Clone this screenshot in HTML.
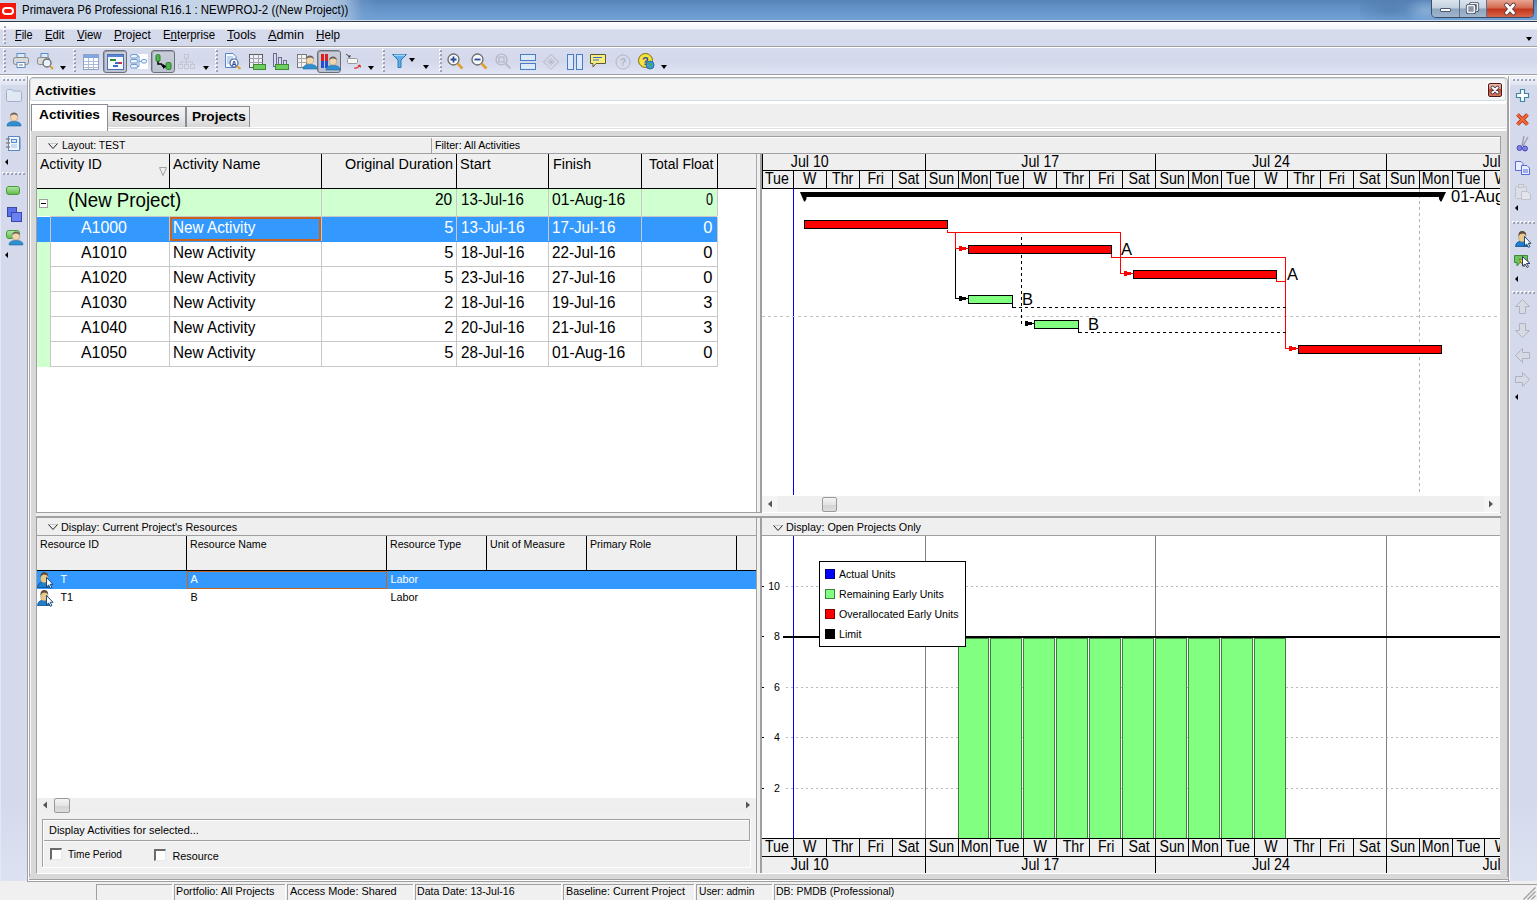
<!DOCTYPE html><html><head><meta charset="utf-8"><style>
*{margin:0;padding:0;box-sizing:border-box}
html,body{width:1537px;height:900px;overflow:hidden;background:#f0f0f0;font-family:"Liberation Sans",sans-serif;color:#000}
.a{position:absolute}
.t{position:absolute;white-space:nowrap;line-height:1}
.grip{position:absolute;width:3px;background:repeating-linear-gradient(#a9afc2 0 2px,transparent 2px 4px)}
.hgrip{position:absolute;height:3px;background:repeating-linear-gradient(90deg,#a9afc2 0 3px,transparent 3px 5px)}
.dd{position:absolute;width:0;height:0;border-left:3.5px solid transparent;border-right:3.5px solid transparent;border-top:4px solid #000}
.la{position:absolute;width:0;height:0;border-top:3px solid transparent;border-bottom:3px solid transparent;border-right:3px solid #000}
svg{position:absolute;overflow:visible}
</style></head><body>
<div class="a" style="left:0;top:0;width:1537px;height:20px;background:linear-gradient(#5682b5 0px,#5f8dc1 5px,#6898cd 12px,#6fa0d3 19px)"></div>
<div class="a" style="left:0;top:0;width:380px;height:20px;background:linear-gradient(90deg,rgba(200,214,232,1) 0px,rgba(196,211,230,1) 300px,rgba(170,195,224,0.8) 345px,rgba(130,165,210,0.3) 362px,rgba(110,150,200,0) 378px)"></div>
<div class="a" style="left:1360px;top:0;width:75px;height:20px;background:radial-gradient(ellipse 40px 14px at 30px 10px,rgba(60,95,140,0.35),rgba(60,95,140,0))"></div>
<div class="a" style="left:1400px;top:0;width:40px;height:20px;background:radial-gradient(ellipse 20px 12px at 25px 10px,rgba(200,220,240,0.35),rgba(200,220,240,0))"></div>
<div class="a" style="left:0px;top:20px;width:1537px;height:1px;background:#d2dce8"></div>
<div class="a" style="left:0px;top:21px;width:1537px;height:1px;background:#2c3a4c"></div>
<div class="a" style="left:0px;top:3px;width:16px;height:16px;background:#f4160a"></div>
<div class="a" style="left:2px;top:7px;width:12px;height:8px;border:2px solid #fff;border-radius:4px"></div>
<div class="t" style="left:21.50px;top:4.33px;font-size:12.6px;transform:scaleX(0.9090);transform-origin:0 0;">Primavera P6 Professional R16.1 : NEWPROJ-2 ((New Project))</div>
<div class="a" style="left:1431px;top:0;width:103px;height:18px;border:1px solid #3a4d66;border-top:none;border-radius:0 0 5px 5px;overflow:hidden"><div class="a" style="left:0;top:0;width:27px;height:17px;background:linear-gradient(#dbe4ee,#c3d0de 48%,#8da5bf 52%,#a2b6cc)"></div><div class="a" style="left:27px;top:0;width:1px;height:17px;background:#5d718a"></div><div class="a" style="left:28px;top:0;width:26px;height:17px;background:linear-gradient(#dbe4ee,#c3d0de 48%,#8da5bf 52%,#a2b6cc)"></div><div class="a" style="left:54px;top:0;width:1px;height:17px;background:#5d718a"></div><div class="a" style="left:55px;top:0;width:47px;height:17px;background:linear-gradient(#e8a593,#d46a52 45%,#c2361d 55%,#d8654a)"></div></div>
<div class="a" style="left:1440px;top:8px;width:11px;height:4px;background:#fff;border:1px solid #4a5a70;border-radius:1px"></div>
<svg style="left:1466px;top:2px" width="13" height="13"><rect x="4.5" y="1.5" width="7" height="7" rx="1" fill="none" stroke="#3c4a5e" stroke-width="3.2"/><rect x="4.5" y="1.5" width="7" height="7" rx="1" fill="none" stroke="#f4f4f4" stroke-width="1.6"/><rect x="2" y="4" width="7" height="7" rx="1" fill="#4a5a70"/><rect x="1.5" y="3.5" width="7" height="7" rx="1" fill="#c8d2dc" stroke="#3c4a5e" stroke-width="3.2"/><rect x="1.5" y="3.5" width="7" height="7" rx="1" fill="#8a96a6" stroke="#f4f4f4" stroke-width="1.6"/></svg>
<svg style="left:1503px;top:3px" width="14" height="12"><path d="M3.5 2 L10.5 10 M10.5 2 L3.5 10" stroke="#5a4040" stroke-width="4.6" stroke-linecap="round"/><path d="M3.5 2 L10.5 10 M10.5 2 L3.5 10" stroke="#fff" stroke-width="2.8" stroke-linecap="round"/></svg>
<div class="a" style="left:0;top:22px;width:1537px;height:25px;background:linear-gradient(#ffffff 0px,#f3f5fa 7px,#d6dbec 8px,#d4d9eb 24px)"></div>
<div class="a" style="left:0px;top:46px;width:1537px;height:1px;background:#a0a0a0"></div>
<div class="a" style="left:4px;top:26px;width:2px;height:2px;background:#9da3b4;box-shadow:-1px -1px 0 #ffffff"></div>
<div class="a" style="left:4px;top:30px;width:2px;height:2px;background:#9da3b4;box-shadow:-1px -1px 0 #ffffff"></div>
<div class="a" style="left:4px;top:34px;width:2px;height:2px;background:#9da3b4;box-shadow:-1px -1px 0 #ffffff"></div>
<div class="a" style="left:4px;top:38px;width:2px;height:2px;background:#9da3b4;box-shadow:-1px -1px 0 #ffffff"></div>
<div class="a" style="left:4px;top:42px;width:2px;height:2px;background:#9da3b4;box-shadow:-1px -1px 0 #ffffff"></div>
<div class="t" style="left:15.40px;top:28.96px;font-size:12.8px;transform:scaleX(0.8487);transform-origin:0 0;"><u>F</u>ile</div>
<div class="t" style="left:45.10px;top:28.96px;font-size:12.8px;transform:scaleX(0.8842);transform-origin:0 0;"><u>E</u>dit</div>
<div class="t" style="left:77.10px;top:28.96px;font-size:12.8px;transform:scaleX(0.8931);transform-origin:0 0;"><u>V</u>iew</div>
<div class="t" style="left:114.20px;top:28.96px;font-size:12.8px;transform:scaleX(0.9238);transform-origin:0 0;"><u>P</u>roject</div>
<div class="t" style="left:163.00px;top:28.96px;font-size:12.8px;transform:scaleX(0.8913);transform-origin:0 0;">E<u>n</u>terprise</div>
<div class="t" style="left:227.00px;top:28.96px;font-size:12.8px;transform:scaleX(0.9707);transform-origin:0 0;"><u>T</u>ools</div>
<div class="t" style="left:268.00px;top:28.96px;font-size:12.8px;transform:scaleX(0.9921);transform-origin:0 0;"><u>A</u>dmin</div>
<div class="t" style="left:316.00px;top:28.96px;font-size:12.8px;transform:scaleX(0.9115);transform-origin:0 0;"><u>H</u>elp</div>
<div class="dd" style="left:1526px;top:37px"></div>
<div class="a" style="left:0;top:47px;width:1537px;height:28px;background:linear-gradient(#d6dbee 0,#d3d8eb 14px,#d8ddef 20px,#e0e5f5 26px)"></div>
<div class="a" style="left:0px;top:47px;width:1537px;height:1px;background:#ffffff"></div>
<div class="a" style="left:0px;top:74px;width:1537px;height:1px;background:#a0a0a0"></div>
<div class="a" style="left:0px;top:75px;width:1537px;height:1px;background:#ffffff"></div>
<div class="a" style="left:4px;top:50px;width:2px;height:2px;background:#9da3b4;box-shadow:-1px -1px 0 #ffffff"></div>
<div class="a" style="left:4px;top:54px;width:2px;height:2px;background:#9da3b4;box-shadow:-1px -1px 0 #ffffff"></div>
<div class="a" style="left:4px;top:58px;width:2px;height:2px;background:#9da3b4;box-shadow:-1px -1px 0 #ffffff"></div>
<div class="a" style="left:4px;top:62px;width:2px;height:2px;background:#9da3b4;box-shadow:-1px -1px 0 #ffffff"></div>
<div class="a" style="left:4px;top:66px;width:2px;height:2px;background:#9da3b4;box-shadow:-1px -1px 0 #ffffff"></div>
<div class="a" style="left:4px;top:70px;width:2px;height:2px;background:#9da3b4;box-shadow:-1px -1px 0 #ffffff"></div>
<div class="a" style="left:74px;top:50px;width:2px;height:2px;background:#9da3b4;box-shadow:-1px -1px 0 #ffffff"></div>
<div class="a" style="left:74px;top:54px;width:2px;height:2px;background:#9da3b4;box-shadow:-1px -1px 0 #ffffff"></div>
<div class="a" style="left:74px;top:58px;width:2px;height:2px;background:#9da3b4;box-shadow:-1px -1px 0 #ffffff"></div>
<div class="a" style="left:74px;top:62px;width:2px;height:2px;background:#9da3b4;box-shadow:-1px -1px 0 #ffffff"></div>
<div class="a" style="left:74px;top:66px;width:2px;height:2px;background:#9da3b4;box-shadow:-1px -1px 0 #ffffff"></div>
<div class="a" style="left:74px;top:70px;width:2px;height:2px;background:#9da3b4;box-shadow:-1px -1px 0 #ffffff"></div>
<div class="a" style="left:216px;top:50px;width:2px;height:2px;background:#9da3b4;box-shadow:-1px -1px 0 #ffffff"></div>
<div class="a" style="left:216px;top:54px;width:2px;height:2px;background:#9da3b4;box-shadow:-1px -1px 0 #ffffff"></div>
<div class="a" style="left:216px;top:58px;width:2px;height:2px;background:#9da3b4;box-shadow:-1px -1px 0 #ffffff"></div>
<div class="a" style="left:216px;top:62px;width:2px;height:2px;background:#9da3b4;box-shadow:-1px -1px 0 #ffffff"></div>
<div class="a" style="left:216px;top:66px;width:2px;height:2px;background:#9da3b4;box-shadow:-1px -1px 0 #ffffff"></div>
<div class="a" style="left:216px;top:70px;width:2px;height:2px;background:#9da3b4;box-shadow:-1px -1px 0 #ffffff"></div>
<div class="a" style="left:383px;top:50px;width:2px;height:2px;background:#9da3b4;box-shadow:-1px -1px 0 #ffffff"></div>
<div class="a" style="left:383px;top:54px;width:2px;height:2px;background:#9da3b4;box-shadow:-1px -1px 0 #ffffff"></div>
<div class="a" style="left:383px;top:58px;width:2px;height:2px;background:#9da3b4;box-shadow:-1px -1px 0 #ffffff"></div>
<div class="a" style="left:383px;top:62px;width:2px;height:2px;background:#9da3b4;box-shadow:-1px -1px 0 #ffffff"></div>
<div class="a" style="left:383px;top:66px;width:2px;height:2px;background:#9da3b4;box-shadow:-1px -1px 0 #ffffff"></div>
<div class="a" style="left:383px;top:70px;width:2px;height:2px;background:#9da3b4;box-shadow:-1px -1px 0 #ffffff"></div>
<div class="a" style="left:440px;top:50px;width:2px;height:2px;background:#9da3b4;box-shadow:-1px -1px 0 #ffffff"></div>
<div class="a" style="left:440px;top:54px;width:2px;height:2px;background:#9da3b4;box-shadow:-1px -1px 0 #ffffff"></div>
<div class="a" style="left:440px;top:58px;width:2px;height:2px;background:#9da3b4;box-shadow:-1px -1px 0 #ffffff"></div>
<div class="a" style="left:440px;top:62px;width:2px;height:2px;background:#9da3b4;box-shadow:-1px -1px 0 #ffffff"></div>
<div class="a" style="left:440px;top:66px;width:2px;height:2px;background:#9da3b4;box-shadow:-1px -1px 0 #ffffff"></div>
<div class="a" style="left:440px;top:70px;width:2px;height:2px;background:#9da3b4;box-shadow:-1px -1px 0 #ffffff"></div>
<div class="a" style="left:103px;top:50px;width:24px;height:23px;border:1px solid #6d6f78;border-radius:3px;background:linear-gradient(#c8cdd9,#bcc2d0);box-shadow:inset 1px 1px 0 #9da2ae"></div>
<div class="a" style="left:151px;top:50px;width:24px;height:23px;border:1px solid #6d6f78;border-radius:3px;background:linear-gradient(#c8cdd9,#bcc2d0);box-shadow:inset 1px 1px 0 #9da2ae"></div>
<div class="a" style="left:317px;top:50px;width:24px;height:23px;border:1px solid #6d6f78;border-radius:3px;background:linear-gradient(#c8cdd9,#bcc2d0);box-shadow:inset 1px 1px 0 #9da2ae"></div>
<div class="dd" style="left:60px;top:66px"></div>
<div class="dd" style="left:203px;top:66px"></div>
<div class="dd" style="left:368px;top:66px"></div>
<div class="dd" style="left:409px;top:58px"></div>
<div class="dd" style="left:423px;top:65px"></div>
<div class="dd" style="left:661px;top:65px"></div>
<svg style="left:13px;top:53px" width="16" height="16"><rect x="4" y="0.5" width="8" height="5" fill="#dce9f7" stroke="#5b8bc8"/><rect x="0.5" y="4.5" width="15" height="7" rx="2" fill="#d9d9d9" stroke="#8a8a8a"/><rect x="4" y="9.5" width="8" height="5" fill="#fff" stroke="#5b8bc8"/><line x1="6" y1="12" x2="10" y2="12" stroke="#777"/></svg>
<svg style="left:37px;top:53px" width="18" height="17"><rect x="4" y="0.5" width="7" height="5" fill="#dce9f7" stroke="#5b8bc8"/><rect x="0.5" y="4.5" width="12" height="7" rx="2" fill="#d9d9d9" stroke="#8a8a8a"/><circle cx="10" cy="10" r="4" fill="#e8f2ff" stroke="#6a6a6a" stroke-width="1.3"/><line x1="13" y1="13" x2="16" y2="16" stroke="#d8a038" stroke-width="2"/></svg>
<svg style="left:83px;top:54px" width="16" height="16"><rect x="0.5" y="0.5" width="15" height="15" fill="#fff" stroke="#8fa3c3"/><rect x="1" y="1" width="14" height="3" fill="#7fa6e0"/><path d="M1 7.5H15M1 10.5H15M1 13.5H15M5.5 4V15M10.5 4V15" stroke="#a9bbd8"/></svg>
<svg style="left:107px;top:54px" width="17" height="16"><rect x="0.5" y="0.5" width="16" height="15" fill="#f4f8ff" stroke="#4d6fb3"/><rect x="1" y="1" width="15" height="2" fill="#5b84d6"/><rect x="3" y="5" width="6" height="2" fill="#2e8b2e"/><rect x="8" y="8" width="4" height="2" fill="#3a6cd0"/><rect x="12" y="8" width="3" height="2" fill="#e03030"/><rect x="6" y="11" width="5" height="2" fill="#3a6cd0"/></svg>
<svg style="left:130px;top:53px" width="18" height="17"><rect x="8" y="1" width="10" height="15" fill="#fff"/><g fill="#eef4ff" stroke="#6d9ad0"><rect x="0.5" y="1.5" width="7" height="3.5" rx="1.5"/><rect x="0.5" y="6.5" width="7" height="3.5" rx="1.5"/><rect x="0.5" y="11.5" width="7" height="3.5" rx="1.5"/><rect x="11.5" y="6.5" width="5" height="3.5" rx="1.5"/></g><path d="M7.5 3H9V13.5H7.5M9 8.3H11.5" fill="none" stroke="#6d9ad0"/></svg>
<svg style="left:155px;top:54px" width="17" height="16"><rect x="1" y="0.5" width="4" height="7" rx="1.5" fill="#4fb34f" stroke="#2a7d2a"/><rect x="11" y="8.5" width="5" height="7" rx="1.5" fill="#4fb34f" stroke="#2a7d2a"/><path d="M3 7.5V10H6.5L8 12.5H11" fill="none" stroke="#000" stroke-width="1.5"/><path d="M8 10L11 12.5L8 15Z" fill="#000"/></svg>
<svg style="left:178px;top:54px" width="17" height="16" opacity="0.5"><g fill="none" stroke="#b3b3b3"><rect x="6.5" y="0.5" width="4" height="4"/><rect x="0.5" y="10.5" width="4" height="4"/><rect x="6.5" y="10.5" width="4" height="4"/><rect x="12.5" y="10.5" width="4" height="4"/><path d="M8.5 4.5V8M2.5 8H14.5M2.5 8V10M14.5 8V10M8.5 8V10"/></g></svg>
<svg style="left:225px;top:53px" width="17" height="17"><path d="M0.5 0.5H8L11 3.5V14.5H0.5Z" fill="#f4f8ff" stroke="#5b84c8"/><path d="M2 4H8M2 6H9M2 8H6M2 10H6" stroke="#8fb0e0"/><circle cx="9" cy="10" r="4" fill="#fff" stroke="#4a66a8" stroke-width="1.2"/><text x="6.6" y="12.6" font-size="7" font-family="Liberation Sans" fill="#2a4a9a" font-weight="bold">A</text><line x1="12" y1="13" x2="15.5" y2="16" stroke="#e0a030" stroke-width="2"/></svg>
<svg style="left:249px;top:54px" width="17" height="16"><rect x="0.5" y="0.5" width="13" height="13" fill="#f0eef8" stroke="#5a5a5a"/><path d="M0.5 4.5H13.5M0.5 8.5H13.5M4.5 0.5V13.5M9.5 0.5V13.5" stroke="#a0a0b0"/><rect x="4.5" y="10.5" width="12" height="5" fill="#6ccf5f" stroke="#3d8a35"/></svg>
<svg style="left:273px;top:53px" width="17" height="17"><rect x="0.5" y="0.5" width="3" height="13" fill="#d8d8f4" stroke="#6a6a8a"/><rect x="5.5" y="4.5" width="3" height="9" fill="#d8d8f4" stroke="#6a6a8a"/><rect x="10.5" y="7.5" width="3" height="6" fill="#d8d8f4" stroke="#6a6a8a"/><rect x="2.5" y="11.5" width="13" height="5" fill="#6ccf5f" stroke="#3d8a35"/></svg>
<svg style="left:297px;top:54px" width="17" height="16"><rect x="0.5" y="0.5" width="9" height="13" fill="#f4f4f4" stroke="#777"/><path d="M0.5 4.5H9.5M0.5 8.5H9.5M4.5 0.5V13.5" stroke="#aaa"/></svg>
<svg style="left:302px;top:54px" width="16" height="16" viewBox="0 0 16 16"><path d="M1 15C1 11.5 4 10.5 8 10.5S15 11.5 15 15Z" fill="#2f8fd0" stroke="#1f6aa0" stroke-width="0.6"/><circle cx="8" cy="6.2" r="3.8" fill="#f1d6b0" stroke="#b59a78" stroke-width="0.6"/><path d="M4.2 5.5C4.2 2.5 6 1.5 8 1.5S11.8 2.5 11.8 5.5C11 4 9.5 3.5 8 3.5S5 4 4.2 5.5Z" fill="#6a6058"/></svg>
<svg style="left:320px;top:53px" width="18" height="17"><rect x="1" y="1" width="3" height="14" fill="#e02020"/><rect x="1" y="8" width="3" height="7" fill="#2050d0"/><rect x="5" y="1" width="3" height="7" fill="#e02020"/><rect x="5" y="8" width="3" height="7" fill="#2050d0"/></svg>
<svg style="left:325px;top:55px" width="16" height="16" viewBox="0 0 16 16"><path d="M1 15C1 11.5 4 10.5 8 10.5S15 11.5 15 15Z" fill="#2f8fd0" stroke="#1f6aa0" stroke-width="0.6"/><circle cx="8" cy="6.2" r="3.8" fill="#f1d6b0" stroke="#b59a78" stroke-width="0.6"/><path d="M4.2 5.5C4.2 2.5 6 1.5 8 1.5S11.8 2.5 11.8 5.5C11 4 9.5 3.5 8 3.5S5 4 4.2 5.5Z" fill="#6a6058"/></svg>
<svg style="left:345px;top:53px" width="17" height="17"><path d="M1 1L5 4M5 4V2M5 4H3" stroke="#444" fill="none"/><rect x="2.5" y="5.5" width="10" height="5" rx="1" fill="#f4f4f4" stroke="#9a9a9a"/><path d="M9 15C12 15.5 14 14 15 12M15 12L15.5 14.5M15 12L12.8 12.8" stroke="#e03030" fill="none" stroke-width="1.2"/></svg>
<svg style="left:392px;top:53px" width="15" height="16"><path d="M0.5 1.5H14.5L9 7V14.5H6V7Z" fill="#5fb0e8" stroke="#2a78b8"/><path d="M2 2.2H13" stroke="#bfe3ff"/></svg>
<svg style="left:447px;top:53px" width="17" height="17"><circle cx="6.5" cy="6.5" r="5.5" fill="#f6f8fb" stroke="#6b6b6b" stroke-width="1.3"/><path d="M3.5 6.5H9.5M6.5 3.5V9.5" stroke="#2a4a9a" stroke-width="1.8"/><path d="M10.5 10.5L15.5 15.5" stroke="#e0a030" stroke-width="2.5"/></svg>
<svg style="left:471px;top:53px" width="17" height="17"><circle cx="6.5" cy="6.5" r="5.5" fill="#f6f8fb" stroke="#6b6b6b" stroke-width="1.3"/><path d="M3.5 6.5H9.5" stroke="#2a4a9a" stroke-width="1.8"/><path d="M10.5 10.5L15.5 15.5" stroke="#e0a030" stroke-width="2.5"/></svg>
<svg style="left:495px;top:53px" width="17" height="17" opacity="0.45"><circle cx="6.5" cy="6.5" r="5.5" fill="none" stroke="#8a8a8a" stroke-width="1.2"/><rect x="4" y="4" width="5" height="5" fill="none" stroke="#8a8a8a"/><path d="M10.5 10.5L15.5 15.5" stroke="#9a9a9a" stroke-width="2"/></svg>
<svg style="left:520px;top:54px" width="16" height="16"><rect x="0.5" y="0.5" width="15" height="6" fill="#dce9fa" stroke="#4a7ac8"/><rect x="0.5" y="9.5" width="15" height="6" fill="#dce9fa" stroke="#4a7ac8"/></svg>
<svg style="left:543px;top:54px" width="16" height="16" opacity="0.45"><path d="M8 0.5L15.5 8L8 15.5L0.5 8Z" fill="none" stroke="#8a8a8a"/><path d="M8 4V12M4 8H12M5.5 5.5L10.5 10.5M10.5 5.5L5.5 10.5" stroke="#9a9a9a"/></svg>
<svg style="left:567px;top:54px" width="16" height="16"><rect x="0.5" y="0.5" width="6" height="15" fill="#dce9fa" stroke="#4a7ac8"/><rect x="9.5" y="0.5" width="6" height="15" fill="#dce9fa" stroke="#4a7ac8"/></svg>
<svg style="left:590px;top:53px" width="17" height="17"><path d="M0.5 1.5H15.5V10.5H6L3 14V10.5H0.5Z" fill="#f8ec7a" stroke="#5a5a3a"/><path d="M3 4.5H12M3 7H9" stroke="#3a6ad0"/></svg>
<svg style="left:615px;top:54px" width="16" height="16" opacity="0.45"><circle cx="8" cy="8" r="7" fill="none" stroke="#8a8a8a"/><text x="5" y="12" font-size="10" font-family="Liberation Sans" font-weight="bold" fill="#8a8a8a">?</text></svg>
<svg style="left:638px;top:53px" width="17" height="17"><circle cx="7.5" cy="7.5" r="7" fill="#f5e23a" stroke="#7a6a10"/><text x="4" y="12" font-size="11" font-family="Liberation Sans" font-weight="bold" fill="#2a4aa0">?</text><circle cx="12" cy="12" r="4" fill="#3a9ae0" stroke="#2a6aa0"/><path d="M10 11C11 10 12 12 14 11M11 14L13 13" stroke="#40b040" stroke-width="1.5"/></svg>
<div class="a" style="left:0;top:76px;width:27px;height:805px;background:linear-gradient(#d4d9ec 90%,#dde2f2)"></div>
<div class="a" style="left:0px;top:76px;width:27px;height:9px;background:linear-gradient(#eef0f8,#e2e6f2)"></div>
<div class="a" style="left:0px;top:85px;width:1px;height:796px;background:#e4e8f5"></div>
<div class="a" style="left:27px;top:76px;width:1px;height:805px;background:#a0a0a0"></div>
<div class="a" style="left:28px;top:76px;width:1px;height:804px;background:#ffffff"></div>
<div class="a" style="left:29px;top:131px;width:1px;height:746px;background:#b0b0b0"></div>
<div class="a" style="left:3px;top:79px;width:2px;height:2px;background:#9da3b4;box-shadow:-1px -1px 0 #ffffff"></div>
<div class="a" style="left:7px;top:79px;width:2px;height:2px;background:#9da3b4;box-shadow:-1px -1px 0 #ffffff"></div>
<div class="a" style="left:11px;top:79px;width:2px;height:2px;background:#9da3b4;box-shadow:-1px -1px 0 #ffffff"></div>
<div class="a" style="left:15px;top:79px;width:2px;height:2px;background:#9da3b4;box-shadow:-1px -1px 0 #ffffff"></div>
<div class="a" style="left:19px;top:79px;width:2px;height:2px;background:#9da3b4;box-shadow:-1px -1px 0 #ffffff"></div>
<div class="a" style="left:23px;top:79px;width:2px;height:2px;background:#9da3b4;box-shadow:-1px -1px 0 #ffffff"></div>
<div class="a" style="left:3px;top:173px;width:2px;height:2px;background:#9da3b4;box-shadow:-1px -1px 0 #ffffff"></div>
<div class="a" style="left:7px;top:173px;width:2px;height:2px;background:#9da3b4;box-shadow:-1px -1px 0 #ffffff"></div>
<div class="a" style="left:11px;top:173px;width:2px;height:2px;background:#9da3b4;box-shadow:-1px -1px 0 #ffffff"></div>
<div class="a" style="left:15px;top:173px;width:2px;height:2px;background:#9da3b4;box-shadow:-1px -1px 0 #ffffff"></div>
<div class="a" style="left:19px;top:173px;width:2px;height:2px;background:#9da3b4;box-shadow:-1px -1px 0 #ffffff"></div>
<div class="a" style="left:23px;top:173px;width:2px;height:2px;background:#9da3b4;box-shadow:-1px -1px 0 #ffffff"></div>
<svg style="left:6px;top:89px" width="16" height="13"><path d="M0.5 2.5C0.5 1 1 0.5 2.5 0.5H6L7.5 2H13.5C15 2 15.5 2.5 15.5 4V11C15.5 12 15 12.5 14 12.5H2C1 12.5 0.5 12 0.5 11Z" fill="#dfe8f3" stroke="#9fb0c8"/></svg>
<svg style="left:6px;top:111px" width="16" height="16" viewBox="0 0 16 16"><path d="M1 15C1 11.5 4 10.5 8 10.5S15 11.5 15 15Z" fill="#2f8fd0" stroke="#1f6aa0" stroke-width="0.6"/><circle cx="8" cy="6.2" r="3.8" fill="#f1d6b0" stroke="#b59a78" stroke-width="0.6"/><path d="M4.2 5.5C4.2 2.5 6 1.5 8 1.5S11.8 2.5 11.8 5.5C11 4 9.5 3.5 8 3.5S5 4 4.2 5.5Z" fill="#6a6058"/></svg>
<svg style="left:5px;top:135px" width="17" height="17"><rect x="3.5" y="1.5" width="11" height="14" fill="#f2f6fc" stroke="#5b88c8"/><path d="M15.5 2.5V14.5" stroke="#8fb0e0"/><rect x="6.5" y="4.5" width="5" height="3" fill="#dbe7f7" stroke="#5b88c8"/><path d="M6 10H12M6 12H12" stroke="#9fc0e8"/><path d="M1 4H5M1 8H5M1 12H5" stroke="#8a8478" stroke-width="1.5"/></svg>
<div class="la" style="left:5px;top:159px"></div>
<svg style="left:6px;top:186px" width="14" height="9"><defs><linearGradient id="gp" x1="0" y1="0" x2="0" y2="1"><stop offset="0" stop-color="#b4e8a8"/><stop offset="1" stop-color="#5cb84c"/></linearGradient></defs><rect x="0.5" y="0.5" width="13" height="8" rx="2.5" fill="url(#gp)" stroke="#4a9a3a"/></svg>
<svg style="left:7px;top:207px" width="15" height="15"><rect x="0.5" y="0.5" width="9" height="9" fill="#5a70e8" stroke="#3a48a8"/><rect x="4.5" y="5.5" width="10" height="9" fill="#6a80f0" stroke="#3a48a8"/></svg>
<svg style="left:6px;top:230px" width="14" height="9"><rect x="0.5" y="0.5" width="13" height="8" rx="2.5" fill="url(#gp)" stroke="#4a9a3a"/></svg>
<svg style="left:8px;top:230px" width="16" height="16" viewBox="0 0 16 16"><path d="M1 15C1 11.5 4 10.5 8 10.5S15 11.5 15 15Z" fill="#2f8fd0" stroke="#1f6aa0" stroke-width="0.6"/><circle cx="8" cy="6.2" r="3.8" fill="#f1d6b0" stroke="#b59a78" stroke-width="0.6"/><path d="M4.2 5.5C4.2 2.5 6 1.5 8 1.5S11.8 2.5 11.8 5.5C11 4 9.5 3.5 8 3.5S5 4 4.2 5.5Z" fill="#6a6058"/></svg>
<div class="la" style="left:5px;top:252px"></div>
<div class="a" style="left:1510px;top:76px;width:27px;height:805px;background:linear-gradient(#d4d9ec 90%,#dde2f2)"></div>
<div class="a" style="left:1507px;top:76px;width:2px;height:805px;background:#a0a0a0"></div>
<div class="a" style="left:1509px;top:76px;width:1px;height:804px;background:#ffffff"></div>
<div class="a" style="left:1510px;top:76px;width:27px;height:9px;background:linear-gradient(#eef0f8,#e2e6f2)"></div>
<div class="a" style="left:1513px;top:79px;width:2px;height:2px;background:#9da3b4;box-shadow:-1px -1px 0 #ffffff"></div>
<div class="a" style="left:1517px;top:79px;width:2px;height:2px;background:#9da3b4;box-shadow:-1px -1px 0 #ffffff"></div>
<div class="a" style="left:1521px;top:79px;width:2px;height:2px;background:#9da3b4;box-shadow:-1px -1px 0 #ffffff"></div>
<div class="a" style="left:1525px;top:79px;width:2px;height:2px;background:#9da3b4;box-shadow:-1px -1px 0 #ffffff"></div>
<div class="a" style="left:1529px;top:79px;width:2px;height:2px;background:#9da3b4;box-shadow:-1px -1px 0 #ffffff"></div>
<div class="a" style="left:1533px;top:79px;width:2px;height:2px;background:#9da3b4;box-shadow:-1px -1px 0 #ffffff"></div>
<div class="a" style="left:1513px;top:222px;width:2px;height:2px;background:#9da3b4;box-shadow:-1px -1px 0 #ffffff"></div>
<div class="a" style="left:1517px;top:222px;width:2px;height:2px;background:#9da3b4;box-shadow:-1px -1px 0 #ffffff"></div>
<div class="a" style="left:1521px;top:222px;width:2px;height:2px;background:#9da3b4;box-shadow:-1px -1px 0 #ffffff"></div>
<div class="a" style="left:1525px;top:222px;width:2px;height:2px;background:#9da3b4;box-shadow:-1px -1px 0 #ffffff"></div>
<div class="a" style="left:1529px;top:222px;width:2px;height:2px;background:#9da3b4;box-shadow:-1px -1px 0 #ffffff"></div>
<div class="a" style="left:1533px;top:222px;width:2px;height:2px;background:#9da3b4;box-shadow:-1px -1px 0 #ffffff"></div>
<div class="a" style="left:1513px;top:292px;width:2px;height:2px;background:#9da3b4;box-shadow:-1px -1px 0 #ffffff"></div>
<div class="a" style="left:1517px;top:292px;width:2px;height:2px;background:#9da3b4;box-shadow:-1px -1px 0 #ffffff"></div>
<div class="a" style="left:1521px;top:292px;width:2px;height:2px;background:#9da3b4;box-shadow:-1px -1px 0 #ffffff"></div>
<div class="a" style="left:1525px;top:292px;width:2px;height:2px;background:#9da3b4;box-shadow:-1px -1px 0 #ffffff"></div>
<div class="a" style="left:1529px;top:292px;width:2px;height:2px;background:#9da3b4;box-shadow:-1px -1px 0 #ffffff"></div>
<div class="a" style="left:1533px;top:292px;width:2px;height:2px;background:#9da3b4;box-shadow:-1px -1px 0 #ffffff"></div>
<svg style="left:1516px;top:89px" width="13" height="13"><path d="M4.5 0.5H8.5V4.5H12.5V8.5H8.5V12.5H4.5V8.5H0.5V4.5H4.5Z" fill="#fff" stroke="#3b86a8" stroke-width="1.2"/></svg>
<svg style="left:1516px;top:113px" width="13" height="13"><path d="M1.5 1.5L11.5 11.5M11.5 1.5L1.5 11.5" stroke="#b83418" stroke-width="3.8"/><path d="M1.5 1.5L11.5 11.5M11.5 1.5L1.5 11.5" stroke="#f06a38" stroke-width="2.2"/></svg>
<svg style="left:1516px;top:136px" width="14" height="16"><path d="M8 0L6 10M12 1L7 10" stroke="#9a9aaa" stroke-width="1.3"/><circle cx="3.5" cy="12" r="2.5" fill="#8080e0" stroke="#4a4ac0"/><circle cx="9" cy="12.5" r="2.5" fill="#8080e0" stroke="#4a4ac0"/></svg>
<svg style="left:1515px;top:161px" width="16" height="14"><path d="M0.5 0.5H6L8 2.5V9.5H0.5Z" fill="#e8eeff" stroke="#5a6ad8"/><path d="M6.5 4.5H12L14.5 7V13.5H6.5Z" fill="#e8eeff" stroke="#5a6ad8"/><path d="M8 9H13M8 11H13" stroke="#5a6ad8"/></svg>
<svg style="left:1515px;top:184px" width="16" height="16" opacity="0.55"><rect x="0.5" y="2.5" width="11" height="12" rx="1" fill="#e4e4e4" stroke="#b0b0b0"/><rect x="3.5" y="0.5" width="5" height="3" fill="#e4e4e4" stroke="#b0b0b0"/><path d="M6.5 7.5H12L15.5 10V15.5H6.5Z" fill="#f0f0f0" stroke="#b0b0b0"/></svg>
<div class="la" style="left:1515px;top:205px"></div>
<svg style="left:1515px;top:230px" width="17" height="18" viewBox="0 0 17 18"><path d="M0.5 16.5C0.8 13 2.5 11.8 5.5 11.2H9.5C12 11.8 13 13.5 13 16.5Z" fill="#1f7fcf" stroke="#0b4f8f" stroke-width="0.8"/><ellipse cx="7.3" cy="7.4" rx="3.6" ry="4.4" fill="#e9c88e" stroke="#a68a5a" stroke-width="0.5"/><path d="M3.4 6.5C3.2 2.5 5 1 7.4 1C9.8 1 11.4 2.5 11.2 6C10.5 4.3 9.2 3.6 7.4 3.6C5.6 3.6 4.2 4.6 3.4 6.5Z" fill="#5b4b3b"/><path d="M9.5 6.5V16L11.6 14L13.3 17.3L14.9 16.5L13.2 13.3H16Z" fill="#fff" stroke="#0a3a6a" stroke-width="0.9" stroke-linejoin="round"/></svg>
<svg style="left:1514px;top:254px" width="16" height="14"><path d="M0.5 1.5H13.5V8.5H6L3 12V8.5H0.5Z" fill="#6cc35f" stroke="#3d8a35"/><path d="M5 5L10 13L12 9L15 8Z" fill="#f8e860" stroke="#8a7a20"/></svg>
<svg style="left:1522px;top:256px" width="9" height="12"><path d="M0.5 0.5V10L3 8L5 11.5L6.5 10.5L4.5 7.5H8Z" fill="#fff" stroke="#2a3a6a"/></svg>
<div class="la" style="left:1515px;top:276px"></div>
<svg style="left:1515px;top:299px" width="15" height="15"><path d="M7.5 0.5L14.5 7.5H10.5V14.5H4.5V7.5H0.5Z" fill="#d6dae4" stroke="#aeb3bf" stroke-linejoin="round"/></svg>
<svg style="left:1515px;top:323px" width="15" height="15"><path d="M7.5 14.5L14.5 7.5H10.5V0.5H4.5V7.5H0.5Z" fill="#d6dae4" stroke="#aeb3bf" stroke-linejoin="round"/></svg>
<svg style="left:1515px;top:348px" width="15" height="15"><path d="M0.5 7.5L7.5 0.5V4.5H14.5V10.5H7.5V14.5Z" fill="#d6dae4" stroke="#aeb3bf" stroke-linejoin="round"/></svg>
<svg style="left:1515px;top:372px" width="15" height="15"><path d="M14.5 7.5L7.5 0.5V4.5H0.5V10.5H7.5V14.5Z" fill="#d6dae4" stroke="#aeb3bf" stroke-linejoin="round"/></svg>
<div class="la" style="left:1515px;top:394px"></div>
<div class="a" style="left:28px;top:75px;width:1480px;height:806px;background:#ffffff"></div>
<div class="a" style="left:29px;top:77px;width:1479px;height:803px;background:#f0f0f0;border:1px solid #a8a8a8;border-radius:4px"></div>
<div class="a" style="left:30px;top:78px;width:1476px;height:23px;background:#f4f4f4;border:1px solid #d3dde8;border-radius:3px"></div>
<div class="t" style="left:35.20px;top:83.57px;font-size:13.5px;font-weight:bold;transform:scaleX(1.0130);transform-origin:0 0;">Activities</div>
<div class="a" style="left:1488px;top:83px;width:14px;height:14px;background:linear-gradient(#f2b8a8 0%,#e09078 40%,#c4482a 45%,#d8785e 100%);border:1px solid #4a1a20;border-radius:2px;box-shadow:0 0 0 1px #fff"></div>
<svg style="left:1491px;top:86px" width="8" height="8"><path d="M1.5 1.5L6.5 6.5M6.5 1.5L1.5 6.5" stroke="#3a3a4a" stroke-width="3.6" stroke-linecap="round"/><path d="M1.5 1.5L6.5 6.5M6.5 1.5L1.5 6.5" stroke="#fff" stroke-width="2" stroke-linecap="round"/></svg>
<div class="a" style="left:30px;top:101px;width:1476px;height:30px;background:#efefef"></div>
<div class="a" style="left:30px;top:101px;width:1476px;height:3px;background:#ffffff"></div>
<div class="a" style="left:30px;top:127px;width:1476px;height:4px;background:#ffffff"></div>
<div class="a" style="left:30px;top:128px;width:1476px;height:1px;background:#e2e2e2"></div>
<div class="a" style="left:107px;top:106px;width:79px;height:21px;background:linear-gradient(#f4f4f4,#e6e6e6 60%,#d6d6d6);border:1px solid #8a8c96;border-bottom:none;border-left:none"></div>
<div class="a" style="left:186px;top:106px;width:64px;height:21px;background:linear-gradient(#f4f4f4,#e6e6e6 60%,#d6d6d6);border:1px solid #8a8c96;border-bottom:none"></div>
<div class="a" style="left:31px;top:104px;width:77px;height:27px;background:#ffffff;border:1px solid #8a8c96;border-bottom:none"></div>
<div class="t" style="left:39.10px;top:108.27px;font-size:13.5px;font-weight:bold;transform:scaleX(1.0146);transform-origin:0 0;">Activities</div>
<div class="t" style="left:112.30px;top:110.27px;font-size:13.5px;font-weight:bold;transform:scaleX(0.9792);transform-origin:0 0;">Resources</div>
<div class="t" style="left:192.30px;top:110.27px;font-size:13.5px;font-weight:bold;transform:scaleX(1.0081);transform-origin:0 0;">Projects</div>
<div class="a" style="left:30px;top:131px;width:1477px;height:748px;background:#d8d8d8;border-radius:0 0 3px 3px"></div>
<div class="a" style="left:30px;top:131px;width:1px;height:746px;background:#f8f8f8"></div>
<div class="a" style="left:36px;top:136px;width:721px;height:377px;background:#ffffff;border:1px solid #a0a0a0"></div>
<div class="a" style="left:36px;top:136px;width:1465px;height:18px;background:#efefef;border:1px solid #a0a0a0;box-shadow:inset 1px 1px 0 #fff"></div>
<svg style="left:48px;top:143px" width="10" height="7"><path d="M0.5 0.5H9.5" stroke="#c8c8c8"/><path d="M0.5 0.5L5 5.5L9.5 0.5" fill="none" stroke="#222"/></svg>
<div class="t" style="left:61.50px;top:139.85px;font-size:10.8px;transform:scaleX(0.9630);transform-origin:0 0;">Layout: TEST</div>
<div class="a" style="left:431px;top:138px;width:1px;height:15px;background:#a0a0a0"></div>
<div class="t" style="left:435.40px;top:139.55px;font-size:10.8px;transform:scaleX(0.9859);transform-origin:0 0;">Filter: All Activities</div>
<div class="a" style="left:37px;top:154px;width:719px;height:34px;background:#efefef"></div>
<div class="a" style="left:37px;top:188px;width:681px;height:1px;background:#000"></div>
<div class="a" style="left:169px;top:154px;width:1px;height:34px;background:#000"></div>
<div class="a" style="left:321px;top:154px;width:1px;height:34px;background:#000"></div>
<div class="a" style="left:456px;top:154px;width:1px;height:34px;background:#000"></div>
<div class="a" style="left:548px;top:154px;width:1px;height:34px;background:#000"></div>
<div class="a" style="left:641px;top:154px;width:1px;height:34px;background:#000"></div>
<div class="a" style="left:717px;top:154px;width:1px;height:34px;background:#000"></div>
<div class="a" style="left:718px;top:188px;width:38px;height:1px;background:#000"></div>
<div class="t" style="left:40.10px;top:155.84px;font-size:15.3px;transform:scaleX(0.9102);transform-origin:0 0;">Activity ID</div>
<svg style="left:159px;top:167px" width="8" height="10"><path d="M0.5 0.5H7.5L4 8.5Z" fill="none" stroke="#a0a0a0"/></svg>
<div class="t" style="left:173.20px;top:155.84px;font-size:15.3px;transform:scaleX(0.9357);transform-origin:0 0;">Activity Name</div>
<div class="t" style="left:344.60px;top:155.84px;font-size:15.3px;transform:scaleX(0.9399);transform-origin:0 0;">Original Duration</div>
<div class="t" style="left:460.00px;top:155.84px;font-size:15.3px;transform:scaleX(0.9501);transform-origin:0 0;">Start</div>
<div class="t" style="left:552.60px;top:155.84px;font-size:15.3px;transform:scaleX(0.9334);transform-origin:0 0;">Finish</div>
<div class="t" style="left:648.90px;top:155.84px;font-size:15.3px;transform:scaleX(0.9139);transform-origin:0 0;">Total Float</div>
<div class="a" style="left:37px;top:189px;width:680px;height:27px;background:#d0ffd0"></div>
<div class="a" style="left:321px;top:189px;width:1px;height:27px;background:#c8c8c8"></div>
<div class="a" style="left:456px;top:189px;width:1px;height:27px;background:#c8c8c8"></div>
<div class="a" style="left:548px;top:189px;width:1px;height:27px;background:#c8c8c8"></div>
<div class="a" style="left:641px;top:189px;width:1px;height:27px;background:#c8c8c8"></div>
<div class="a" style="left:717px;top:189px;width:1px;height:27px;background:#c8c8c8"></div>
<div class="a" style="left:39px;top:199px;width:9px;height:9px;background:#fff;border:1px solid #a0a0a0"></div>
<div class="a" style="left:41px;top:203px;width:5px;height:1px;background:#000"></div>
<div class="t" style="left:67.60px;top:191.35px;font-size:19.3px;transform:scaleX(0.9701);transform-origin:0 0;">(New Project)</div>
<div class="t" style="left:435.20px;top:191.02px;font-size:16.5px;transform:scaleX(0.9374);transform-origin:0 0;">20</div>
<div class="t" style="left:461.20px;top:191.02px;font-size:16.5px;transform:scaleX(0.9129);transform-origin:0 0;">13-Jul-16</div>
<div class="t" style="left:552.20px;top:191.02px;font-size:16.5px;transform:scaleX(0.9500);transform-origin:0 0;">01-Aug-16</div>
<div class="t" style="left:705.50px;top:191.02px;font-size:16.5px;transform:scaleX(0.7630);transform-origin:0 0;">0</div>
<div class="a" style="left:37px;top:217px;width:13px;height:25px;background:#3399ff"></div>
<div class="a" style="left:50px;top:217px;width:667px;height:25px;background:#3399ff"></div>
<div class="a" style="left:50px;top:217px;width:1px;height:25px;background:#c8c8c8"></div>
<div class="a" style="left:169px;top:217px;width:1px;height:25px;background:#c8c8c8"></div>
<div class="a" style="left:321px;top:217px;width:1px;height:25px;background:#c8c8c8"></div>
<div class="a" style="left:456px;top:217px;width:1px;height:25px;background:#c8c8c8"></div>
<div class="a" style="left:548px;top:217px;width:1px;height:25px;background:#c8c8c8"></div>
<div class="a" style="left:641px;top:217px;width:1px;height:25px;background:#c8c8c8"></div>
<div class="a" style="left:717px;top:217px;width:1px;height:25px;background:#c8c8c8"></div>
<div class="t" style="left:81.40px;top:218.92px;font-size:16.5px;transform:scaleX(0.9619);transform-origin:0 0;;color:#ffffff">A1000</div>
<div class="t" style="left:172.80px;top:218.92px;font-size:16.5px;transform:scaleX(0.9265);transform-origin:0 0;;color:#ffffff">New Activity</div>
<div class="t" style="left:444.13px;top:218.92px;font-size:16.5px;;color:#ffffff">5</div>
<div class="t" style="left:461.20px;top:218.92px;font-size:16.5px;transform:scaleX(0.9217);transform-origin:0 0;;color:#ffffff">13-Jul-16</div>
<div class="t" style="left:552.20px;top:218.92px;font-size:16.5px;transform:scaleX(0.9217);transform-origin:0 0;;color:#ffffff">17-Jul-16</div>
<div class="t" style="left:703.33px;top:218.92px;font-size:16.5px;;color:#ffffff">0</div>
<div class="a" style="left:37px;top:242px;width:13px;height:25px;background:#d0ffd0"></div>
<div class="a" style="left:50px;top:242px;width:667px;height:25px;background:#ffffff"></div>
<div class="a" style="left:50px;top:242px;width:1px;height:25px;background:#c8c8c8"></div>
<div class="a" style="left:169px;top:242px;width:1px;height:25px;background:#c8c8c8"></div>
<div class="a" style="left:321px;top:242px;width:1px;height:25px;background:#c8c8c8"></div>
<div class="a" style="left:456px;top:242px;width:1px;height:25px;background:#c8c8c8"></div>
<div class="a" style="left:548px;top:242px;width:1px;height:25px;background:#c8c8c8"></div>
<div class="a" style="left:641px;top:242px;width:1px;height:25px;background:#c8c8c8"></div>
<div class="a" style="left:717px;top:242px;width:1px;height:25px;background:#c8c8c8"></div>
<div class="t" style="left:81.40px;top:243.92px;font-size:16.5px;transform:scaleX(0.9619);transform-origin:0 0;">A1010</div>
<div class="t" style="left:172.80px;top:243.92px;font-size:16.5px;transform:scaleX(0.9265);transform-origin:0 0;">New Activity</div>
<div class="t" style="left:444.13px;top:243.92px;font-size:16.5px;">5</div>
<div class="t" style="left:461.20px;top:243.92px;font-size:16.5px;transform:scaleX(0.9217);transform-origin:0 0;">18-Jul-16</div>
<div class="t" style="left:552.20px;top:243.92px;font-size:16.5px;transform:scaleX(0.9217);transform-origin:0 0;">22-Jul-16</div>
<div class="t" style="left:703.33px;top:243.92px;font-size:16.5px;">0</div>
<div class="a" style="left:37px;top:267px;width:13px;height:25px;background:#d0ffd0"></div>
<div class="a" style="left:50px;top:267px;width:667px;height:25px;background:#ffffff"></div>
<div class="a" style="left:50px;top:267px;width:1px;height:25px;background:#c8c8c8"></div>
<div class="a" style="left:169px;top:267px;width:1px;height:25px;background:#c8c8c8"></div>
<div class="a" style="left:321px;top:267px;width:1px;height:25px;background:#c8c8c8"></div>
<div class="a" style="left:456px;top:267px;width:1px;height:25px;background:#c8c8c8"></div>
<div class="a" style="left:548px;top:267px;width:1px;height:25px;background:#c8c8c8"></div>
<div class="a" style="left:641px;top:267px;width:1px;height:25px;background:#c8c8c8"></div>
<div class="a" style="left:717px;top:267px;width:1px;height:25px;background:#c8c8c8"></div>
<div class="t" style="left:81.40px;top:268.92px;font-size:16.5px;transform:scaleX(0.9619);transform-origin:0 0;">A1020</div>
<div class="t" style="left:172.80px;top:268.92px;font-size:16.5px;transform:scaleX(0.9265);transform-origin:0 0;">New Activity</div>
<div class="t" style="left:444.13px;top:268.92px;font-size:16.5px;">5</div>
<div class="t" style="left:461.20px;top:268.92px;font-size:16.5px;transform:scaleX(0.9217);transform-origin:0 0;">23-Jul-16</div>
<div class="t" style="left:552.20px;top:268.92px;font-size:16.5px;transform:scaleX(0.9217);transform-origin:0 0;">27-Jul-16</div>
<div class="t" style="left:703.33px;top:268.92px;font-size:16.5px;">0</div>
<div class="a" style="left:37px;top:292px;width:13px;height:25px;background:#d0ffd0"></div>
<div class="a" style="left:50px;top:292px;width:667px;height:25px;background:#ffffff"></div>
<div class="a" style="left:50px;top:292px;width:1px;height:25px;background:#c8c8c8"></div>
<div class="a" style="left:169px;top:292px;width:1px;height:25px;background:#c8c8c8"></div>
<div class="a" style="left:321px;top:292px;width:1px;height:25px;background:#c8c8c8"></div>
<div class="a" style="left:456px;top:292px;width:1px;height:25px;background:#c8c8c8"></div>
<div class="a" style="left:548px;top:292px;width:1px;height:25px;background:#c8c8c8"></div>
<div class="a" style="left:641px;top:292px;width:1px;height:25px;background:#c8c8c8"></div>
<div class="a" style="left:717px;top:292px;width:1px;height:25px;background:#c8c8c8"></div>
<div class="t" style="left:81.40px;top:293.92px;font-size:16.5px;transform:scaleX(0.9619);transform-origin:0 0;">A1030</div>
<div class="t" style="left:172.80px;top:293.92px;font-size:16.5px;transform:scaleX(0.9265);transform-origin:0 0;">New Activity</div>
<div class="t" style="left:444.13px;top:293.92px;font-size:16.5px;">2</div>
<div class="t" style="left:461.20px;top:293.92px;font-size:16.5px;transform:scaleX(0.9217);transform-origin:0 0;">18-Jul-16</div>
<div class="t" style="left:552.20px;top:293.92px;font-size:16.5px;transform:scaleX(0.9217);transform-origin:0 0;">19-Jul-16</div>
<div class="t" style="left:703.33px;top:293.92px;font-size:16.5px;">3</div>
<div class="a" style="left:37px;top:317px;width:13px;height:25px;background:#d0ffd0"></div>
<div class="a" style="left:50px;top:317px;width:667px;height:25px;background:#ffffff"></div>
<div class="a" style="left:50px;top:317px;width:1px;height:25px;background:#c8c8c8"></div>
<div class="a" style="left:169px;top:317px;width:1px;height:25px;background:#c8c8c8"></div>
<div class="a" style="left:321px;top:317px;width:1px;height:25px;background:#c8c8c8"></div>
<div class="a" style="left:456px;top:317px;width:1px;height:25px;background:#c8c8c8"></div>
<div class="a" style="left:548px;top:317px;width:1px;height:25px;background:#c8c8c8"></div>
<div class="a" style="left:641px;top:317px;width:1px;height:25px;background:#c8c8c8"></div>
<div class="a" style="left:717px;top:317px;width:1px;height:25px;background:#c8c8c8"></div>
<div class="t" style="left:81.40px;top:318.92px;font-size:16.5px;transform:scaleX(0.9619);transform-origin:0 0;">A1040</div>
<div class="t" style="left:172.80px;top:318.92px;font-size:16.5px;transform:scaleX(0.9265);transform-origin:0 0;">New Activity</div>
<div class="t" style="left:444.13px;top:318.92px;font-size:16.5px;">2</div>
<div class="t" style="left:461.20px;top:318.92px;font-size:16.5px;transform:scaleX(0.9217);transform-origin:0 0;">20-Jul-16</div>
<div class="t" style="left:552.20px;top:318.92px;font-size:16.5px;transform:scaleX(0.9217);transform-origin:0 0;">21-Jul-16</div>
<div class="t" style="left:703.33px;top:318.92px;font-size:16.5px;">3</div>
<div class="a" style="left:37px;top:342px;width:13px;height:25px;background:#d0ffd0"></div>
<div class="a" style="left:50px;top:342px;width:667px;height:25px;background:#ffffff"></div>
<div class="a" style="left:50px;top:342px;width:1px;height:25px;background:#c8c8c8"></div>
<div class="a" style="left:169px;top:342px;width:1px;height:25px;background:#c8c8c8"></div>
<div class="a" style="left:321px;top:342px;width:1px;height:25px;background:#c8c8c8"></div>
<div class="a" style="left:456px;top:342px;width:1px;height:25px;background:#c8c8c8"></div>
<div class="a" style="left:548px;top:342px;width:1px;height:25px;background:#c8c8c8"></div>
<div class="a" style="left:641px;top:342px;width:1px;height:25px;background:#c8c8c8"></div>
<div class="a" style="left:717px;top:342px;width:1px;height:25px;background:#c8c8c8"></div>
<div class="t" style="left:81.40px;top:343.92px;font-size:16.5px;transform:scaleX(0.9619);transform-origin:0 0;">A1050</div>
<div class="t" style="left:172.80px;top:343.92px;font-size:16.5px;transform:scaleX(0.9265);transform-origin:0 0;">New Activity</div>
<div class="t" style="left:444.13px;top:343.92px;font-size:16.5px;">5</div>
<div class="t" style="left:461.20px;top:343.92px;font-size:16.5px;transform:scaleX(0.9217);transform-origin:0 0;">28-Jul-16</div>
<div class="t" style="left:552.20px;top:343.92px;font-size:16.5px;transform:scaleX(0.9500);transform-origin:0 0;">01-Aug-16</div>
<div class="t" style="left:703.33px;top:343.92px;font-size:16.5px;">0</div>
<div class="a" style="left:50px;top:216px;width:667px;height:1px;background:#c8c8c8"></div>
<div class="a" style="left:50px;top:241px;width:667px;height:1px;background:#c8c8c8"></div>
<div class="a" style="left:50px;top:266px;width:667px;height:1px;background:#c8c8c8"></div>
<div class="a" style="left:50px;top:291px;width:667px;height:1px;background:#c8c8c8"></div>
<div class="a" style="left:50px;top:316px;width:667px;height:1px;background:#c8c8c8"></div>
<div class="a" style="left:50px;top:341px;width:667px;height:1px;background:#c8c8c8"></div>
<div class="a" style="left:50px;top:366px;width:667px;height:1px;background:#c8c8c8"></div>
<div class="a" style="left:37px;top:241px;width:680px;height:1px;background:#3399ff"></div>
<div class="a" style="left:50px;top:241px;width:1px;height:1px;background:#c8c8c8"></div>
<div class="a" style="left:170px;top:217px;width:151px;height:24px;border:2px solid #c8641e"></div>
<div class="a" style="left:757px;top:154px;width:3px;height:719px;background:#f0f0f0"></div>
<div class="a" style="left:756px;top:154px;width:1px;height:359px;background:#a8a8a8"></div>
<div class="a" style="left:756px;top:518px;width:1px;height:355px;background:#a0a0a0"></div>
<div class="a" style="left:760px;top:154px;width:2px;height:719px;background:#a0a0a0"></div>
<div class="a" style="left:36px;top:513px;width:1468px;height:4px;background:#f0f0f0"></div>
<div class="a" style="left:36px;top:512px;width:1465px;height:1px;background:#a0a0a0"></div>
<div class="a" style="left:36px;top:516px;width:1465px;height:2px;background:#a0a0a0"></div>
<div class="a" style="left:762px;top:136px;width:738px;height:377px;background:transparent;overflow:hidden">
<svg style="left:0;top:0" width="738" height="377" shape-rendering="crispEdges">
<rect x="0" y="18" width="738" height="359" fill="#fff"/>
<rect x="0" y="18" width="738" height="34" fill="#efefef"/>
<rect x="0" y="18" width="1" height="35" fill="#000"/>
<rect x="0" y="34" width="738" height="1" fill="#000"/>
<rect x="0" y="52" width="738" height="1" fill="#000"/>
<text transform="translate(14.9,48) scale(0.91,1)" text-anchor="middle" font-family="Liberation Sans" font-size="15.6">Tue</text>
<rect x="31" y="35" width="1" height="17" fill="#000"/>
<text transform="translate(47.8,48) scale(0.91,1)" text-anchor="middle" font-family="Liberation Sans" font-size="15.6">W</text>
<rect x="64" y="35" width="1" height="17" fill="#000"/>
<text transform="translate(80.7,48) scale(0.91,1)" text-anchor="middle" font-family="Liberation Sans" font-size="15.6">Thr</text>
<rect x="97" y="35" width="1" height="17" fill="#000"/>
<text transform="translate(113.7,48) scale(0.91,1)" text-anchor="middle" font-family="Liberation Sans" font-size="15.6">Fri</text>
<rect x="130" y="35" width="1" height="17" fill="#000"/>
<text transform="translate(146.6,48) scale(0.91,1)" text-anchor="middle" font-family="Liberation Sans" font-size="15.6">Sat</text>
<rect x="163" y="35" width="1" height="17" fill="#000"/>
<rect x="163" y="18" width="1" height="17" fill="#000"/>
<text transform="translate(179.5,48) scale(0.91,1)" text-anchor="middle" font-family="Liberation Sans" font-size="15.6">Sun</text>
<rect x="196" y="35" width="1" height="17" fill="#000"/>
<text transform="translate(212.5,48) scale(0.91,1)" text-anchor="middle" font-family="Liberation Sans" font-size="15.6">Mon</text>
<rect x="228" y="35" width="1" height="17" fill="#000"/>
<text transform="translate(245.4,48) scale(0.91,1)" text-anchor="middle" font-family="Liberation Sans" font-size="15.6">Tue</text>
<rect x="261" y="35" width="1" height="17" fill="#000"/>
<text transform="translate(278.3,48) scale(0.91,1)" text-anchor="middle" font-family="Liberation Sans" font-size="15.6">W</text>
<rect x="294" y="35" width="1" height="17" fill="#000"/>
<text transform="translate(311.3,48) scale(0.91,1)" text-anchor="middle" font-family="Liberation Sans" font-size="15.6">Thr</text>
<rect x="327" y="35" width="1" height="17" fill="#000"/>
<text transform="translate(344.2,48) scale(0.91,1)" text-anchor="middle" font-family="Liberation Sans" font-size="15.6">Fri</text>
<rect x="360" y="35" width="1" height="17" fill="#000"/>
<text transform="translate(377.1,48) scale(0.91,1)" text-anchor="middle" font-family="Liberation Sans" font-size="15.6">Sat</text>
<rect x="393" y="35" width="1" height="17" fill="#000"/>
<rect x="393" y="18" width="1" height="17" fill="#000"/>
<text transform="translate(410.1,48) scale(0.91,1)" text-anchor="middle" font-family="Liberation Sans" font-size="15.6">Sun</text>
<rect x="426" y="35" width="1" height="17" fill="#000"/>
<text transform="translate(443.0,48) scale(0.91,1)" text-anchor="middle" font-family="Liberation Sans" font-size="15.6">Mon</text>
<rect x="459" y="35" width="1" height="17" fill="#000"/>
<text transform="translate(475.9,48) scale(0.91,1)" text-anchor="middle" font-family="Liberation Sans" font-size="15.6">Tue</text>
<rect x="492" y="35" width="1" height="17" fill="#000"/>
<text transform="translate(508.9,48) scale(0.91,1)" text-anchor="middle" font-family="Liberation Sans" font-size="15.6">W</text>
<rect x="525" y="35" width="1" height="17" fill="#000"/>
<text transform="translate(541.8,48) scale(0.91,1)" text-anchor="middle" font-family="Liberation Sans" font-size="15.6">Thr</text>
<rect x="558" y="35" width="1" height="17" fill="#000"/>
<text transform="translate(574.7,48) scale(0.91,1)" text-anchor="middle" font-family="Liberation Sans" font-size="15.6">Fri</text>
<rect x="591" y="35" width="1" height="17" fill="#000"/>
<text transform="translate(607.7,48) scale(0.91,1)" text-anchor="middle" font-family="Liberation Sans" font-size="15.6">Sat</text>
<rect x="624" y="35" width="1" height="17" fill="#000"/>
<rect x="624" y="18" width="1" height="17" fill="#000"/>
<text transform="translate(640.6,48) scale(0.91,1)" text-anchor="middle" font-family="Liberation Sans" font-size="15.6">Sun</text>
<rect x="657" y="35" width="1" height="17" fill="#000"/>
<text transform="translate(673.5,48) scale(0.91,1)" text-anchor="middle" font-family="Liberation Sans" font-size="15.6">Mon</text>
<rect x="690" y="35" width="1" height="17" fill="#000"/>
<text transform="translate(706.5,48) scale(0.91,1)" text-anchor="middle" font-family="Liberation Sans" font-size="15.6">Tue</text>
<rect x="722" y="35" width="1" height="17" fill="#000"/>
<text transform="translate(739.4,48) scale(0.91,1)" text-anchor="middle" font-family="Liberation Sans" font-size="15.6">W</text>
<rect x="755" y="35" width="1" height="17" fill="#000"/>
<text transform="translate(772.3,48) scale(0.91,1)" text-anchor="middle" font-family="Liberation Sans" font-size="15.6">Thr</text>
<text transform="translate(47.8,31) scale(0.91,1)" text-anchor="middle" font-family="Liberation Sans" font-size="15.6">Jul 10</text>
<text transform="translate(278.3,31) scale(0.91,1)" text-anchor="middle" font-family="Liberation Sans" font-size="15.6">Jul 17</text>
<text transform="translate(508.9,31) scale(0.91,1)" text-anchor="middle" font-family="Liberation Sans" font-size="15.6">Jul 24</text>
<text transform="translate(739.4,31) scale(0.91,1)" text-anchor="middle" font-family="Liberation Sans" font-size="15.6">Jul 31</text>
<rect x="31" y="53" width="1" height="306" fill="#0000ff"/>
<line x1="657.5" y1="53" x2="657.5" y2="358" stroke="#b4b4b4" stroke-dasharray="3,3"/>
<line x1="0" y1="180.5" x2="736" y2="180.5" stroke="#c0c0c0" stroke-dasharray="3,3"/>
<rect x="44" y="56" width="633" height="5" fill="#000"/>
<path d="M38 56L44 56L44.5 63L43 65.5L42 65.5Z" fill="#000" shape-rendering="auto"/>
<path d="M684 56L677 56L677 63L678.5 65.5L679.5 65.5Z" fill="#000" shape-rendering="auto"/>
<text x="689" y="66" font-family="Liberation Sans" font-size="16.5">01-Aug-16</text>
<path d="M185.5 93.5L185.5 96.5" stroke="#ff0000" stroke-width="1" fill="none"/>
<path d="M185.5 96.5L358.5 96.5" stroke="#ff0000" stroke-width="1" fill="none"/>
<path d="M193.5 96.5L193.5 112.5" stroke="#ff0000" stroke-width="1" fill="none"/>
<path d="M193.5 112.5L198.5 112.5" stroke="#ff0000" stroke-width="1" fill="none"/>
<path d="M193.5 112.5L193.5 162.5" stroke="#000000" stroke-width="1" fill="none"/>
<path d="M193.5 162.5L198.5 162.5" stroke="#000000" stroke-width="1" fill="none"/>
<path d="M358.5 96.5L358.5 137.5" stroke="#ff0000" stroke-width="1" fill="none"/>
<path d="M358.5 137.5L363.5 137.5" stroke="#ff0000" stroke-width="1" fill="none"/>
<path d="M349.5 117.5L349.5 121.5" stroke="#ff0000" stroke-width="1" fill="none"/>
<path d="M349.5 121.5L523.5 121.5" stroke="#ff0000" stroke-width="1" fill="none"/>
<path d="M514.5 142.5L514.5 145.5" stroke="#ff0000" stroke-width="1" fill="none"/>
<path d="M514.5 145.5L523.5 145.5" stroke="#ff0000" stroke-width="1" fill="none"/>
<path d="M523.5 121.5L523.5 212.5" stroke="#ff0000" stroke-width="1" fill="none"/>
<path d="M523.5 212.5L528.5 212.5" stroke="#ff0000" stroke-width="1" fill="none"/>
<path d="M250.5 167.5L250.5 171.5" stroke="#000000" stroke-width="1" fill="none"/>
<path d="M250.5 171.5L523.5 171.5" stroke="#000000" stroke-width="1" fill="none" stroke-dasharray="3,3"/>
<path d="M259.5 100.5L259.5 187.5" stroke="#000000" stroke-width="1" fill="none" stroke-dasharray="3,3"/>
<path d="M262.5 187.5L264.5 187.5" stroke="#000000" stroke-width="1" fill="none"/>
<path d="M316.5 192.5L316.5 196.5" stroke="#000000" stroke-width="1" fill="none"/>
<path d="M316.5 196.5L523.5 196.5" stroke="#000000" stroke-width="1" fill="none" stroke-dasharray="3,3"/>
<rect x="198" y="112" width="8" height="1" fill="#ff0000"/>
<rect x="197" y="110" width="3" height="5" fill="#ff0000"/>
<rect x="200" y="111" width="4" height="3" fill="#ff0000"/>
<rect x="198" y="162" width="8" height="1" fill="#000000"/>
<rect x="197" y="160" width="3" height="5" fill="#000000"/>
<rect x="200" y="161" width="4" height="3" fill="#000000"/>
<rect x="363" y="137" width="8" height="1" fill="#ff0000"/>
<rect x="362" y="135" width="3" height="5" fill="#ff0000"/>
<rect x="365" y="136" width="4" height="3" fill="#ff0000"/>
<rect x="264" y="187" width="8" height="1" fill="#000000"/>
<rect x="263" y="185" width="3" height="5" fill="#000000"/>
<rect x="266" y="186" width="4" height="3" fill="#000000"/>
<rect x="528" y="212" width="8" height="1" fill="#ff0000"/>
<rect x="527" y="210" width="3" height="5" fill="#ff0000"/>
<rect x="530" y="211" width="4" height="3" fill="#ff0000"/>
<rect x="42.5" y="84.5" width="143" height="8" fill="#ff0000" stroke="#000" stroke-width="1"/>
<rect x="206.5" y="109.5" width="143" height="8" fill="#ff0000" stroke="#000" stroke-width="1"/>
<rect x="371.5" y="134.5" width="143" height="8" fill="#ff0000" stroke="#000" stroke-width="1"/>
<rect x="206.5" y="159.5" width="44" height="8" fill="#80ff80" stroke="#000" stroke-width="1"/>
<rect x="272.5" y="184.5" width="44" height="8" fill="#80ff80" stroke="#000" stroke-width="1"/>
<rect x="536.5" y="209.5" width="143" height="8" fill="#ff0000" stroke="#000" stroke-width="1"/>
<text x="359" y="119" font-family="Liberation Sans" font-size="16.5">A</text>
<text x="525" y="144" font-family="Liberation Sans" font-size="16.5">A</text>
<text x="260" y="169" font-family="Liberation Sans" font-size="16.5">B</text>
<text x="326" y="194" font-family="Liberation Sans" font-size="16.5">B</text>
<rect x="0" y="360" width="738" height="16" fill="#efefef"/>
<rect x="0" y="360" width="16" height="16" fill="#f4f4f4"/>
<rect x="722" y="360" width="16" height="16" fill="#f4f4f4"/>
</svg>
</div>
<svg style="left:767px;top:500px" width="6" height="8" shape-rendering="auto"><path d="M5 0.5V7.5L1 4Z" fill="#555"/></svg>
<svg style="left:1488px;top:500px" width="6" height="8" shape-rendering="auto"><path d="M1 0.5V7.5L5 4Z" fill="#555"/></svg>
<div class="a" style="left:822px;top:497px;width:15px;height:15px;background:linear-gradient(#f4f4f4,#e4e4e4 50%,#d4d4d4 51%,#dcdcdc);border:1px solid #9a9a9a;border-radius:2px"></div>
<div class="a" style="left:36px;top:518px;width:720px;height:355px;background:#f0f0f0"></div>
<div class="a" style="left:36px;top:518px;width:1px;height:355px;background:#a0a0a0"></div>
<div class="a" style="left:37px;top:518px;width:719px;height:17px;background:#efefef"></div>
<div class="a" style="left:37px;top:535px;width:719px;height:1px;background:#a0a0a0"></div>
<svg style="left:48px;top:524px" width="10" height="7"><path d="M0.5 0.5H9.5" stroke="#c8c8c8"/><path d="M0.5 0.5L5 5.5L9.5 0.5" fill="none" stroke="#222"/></svg>
<div class="t" style="left:61px;top:522px;font-size:10.8px">Display: Current Project's Resources</div>
<div class="a" style="left:37px;top:536px;width:719px;height:262px;background:#ffffff"></div>
<div class="a" style="left:37px;top:536px;width:719px;height:34px;background:#efefef"></div>
<div class="a" style="left:37px;top:570px;width:719px;height:1px;background:#000"></div>
<div class="a" style="left:186px;top:536px;width:1px;height:34px;background:#000"></div>
<div class="a" style="left:386px;top:536px;width:1px;height:34px;background:#000"></div>
<div class="a" style="left:486px;top:536px;width:1px;height:34px;background:#000"></div>
<div class="a" style="left:586px;top:536px;width:1px;height:34px;background:#000"></div>
<div class="a" style="left:736px;top:536px;width:1px;height:34px;background:#000"></div>
<div class="t" style="left:40px;top:539px;font-size:10.6px">Resource ID</div>
<div class="t" style="left:190px;top:539px;font-size:10.6px">Resource Name</div>
<div class="t" style="left:390px;top:539px;font-size:10.6px">Resource Type</div>
<div class="t" style="left:490px;top:539px;font-size:10.6px">Unit of Measure</div>
<div class="t" style="left:590px;top:539px;font-size:10.6px">Primary Role</div>
<div class="a" style="left:37px;top:571px;width:719px;height:18px;background:#3399ff"></div>
<div class="a" style="left:187px;top:571px;width:200px;height:18px;border:1px solid #c8641e"></div>
<div class="t" style="left:60.50px;top:573.85px;font-size:10.8px;;color:#fff">T</div>
<div class="t" style="left:190.50px;top:573.85px;font-size:10.8px;;color:#fff">A</div>
<div class="t" style="left:390.50px;top:573.85px;font-size:10.8px;;color:#fff">Labor</div>
<div class="t" style="left:60.50px;top:591.85px;font-size:10.8px;">T1</div>
<div class="t" style="left:190.50px;top:591.85px;font-size:10.8px;">B</div>
<div class="t" style="left:390.50px;top:591.85px;font-size:10.8px;">Labor</div>
<svg style="left:37px;top:571px" width="17" height="18" viewBox="0 0 17 18"><path d="M0.5 16.5C0.8 13 2.5 11.8 5.5 11.2H9.5C12 11.8 13 13.5 13 16.5Z" fill="#1f7fcf" stroke="#0b4f8f" stroke-width="0.8"/><ellipse cx="7.3" cy="7.4" rx="3.6" ry="4.4" fill="#e9c88e" stroke="#a68a5a" stroke-width="0.5"/><path d="M3.4 6.5C3.2 2.5 5 1 7.4 1C9.8 1 11.4 2.5 11.2 6C10.5 4.3 9.2 3.6 7.4 3.6C5.6 3.6 4.2 4.6 3.4 6.5Z" fill="#5b4b3b"/><path d="M9.5 6.5V16L11.6 14L13.3 17.3L14.9 16.5L13.2 13.3H16Z" fill="#fff" stroke="#0a3a6a" stroke-width="0.9" stroke-linejoin="round"/></svg>
<svg style="left:37px;top:589px" width="17" height="18" viewBox="0 0 17 18"><path d="M0.5 16.5C0.8 13 2.5 11.8 5.5 11.2H9.5C12 11.8 13 13.5 13 16.5Z" fill="#1f7fcf" stroke="#0b4f8f" stroke-width="0.8"/><ellipse cx="7.3" cy="7.4" rx="3.6" ry="4.4" fill="#e9c88e" stroke="#a68a5a" stroke-width="0.5"/><path d="M3.4 6.5C3.2 2.5 5 1 7.4 1C9.8 1 11.4 2.5 11.2 6C10.5 4.3 9.2 3.6 7.4 3.6C5.6 3.6 4.2 4.6 3.4 6.5Z" fill="#5b4b3b"/><path d="M9.5 6.5V16L11.6 14L13.3 17.3L14.9 16.5L13.2 13.3H16Z" fill="#fff" stroke="#0a3a6a" stroke-width="0.9" stroke-linejoin="round"/></svg>
<div class="a" style="left:37px;top:798px;width:719px;height:15px;background:#efefef"></div>
<svg style="left:42px;top:801px" width="6" height="8"><path d="M5 0.5V7.5L1 4Z" fill="#555"/></svg>
<svg style="left:745px;top:801px" width="6" height="8"><path d="M1 0.5V7.5L5 4Z" fill="#555"/></svg>
<div class="a" style="left:54px;top:798px;width:16px;height:15px;background:linear-gradient(#f4f4f4,#e4e4e4 50%,#d4d4d4 51%,#dcdcdc);border:1px solid #9a9a9a;border-radius:2px"></div>
<div class="a" style="left:42px;top:819px;width:708px;height:48px;border:1px solid #a0a0a0;border-bottom:none;border-right:none;box-shadow:inset 1px 1px 0 #fff"></div>
<div class="a" style="left:749px;top:819px;width:1px;height:22px;background:#a0a0a0"></div>
<div class="a" style="left:750px;top:819px;width:1px;height:49px;background:#fff"></div>
<div class="a" style="left:42px;top:867px;width:709px;height:1px;background:#fff"></div>
<div class="a" style="left:44px;top:840px;width:705px;height:1px;background:#a0a0a0"></div>
<div class="a" style="left:44px;top:841px;width:705px;height:1px;background:#fafafa"></div>
<div class="t" style="left:49.30px;top:825.05px;font-size:10.8px;transform:scaleX(1.0110);transform-origin:0 0;">Display Activities for selected...</div>
<div class="a" style="left:50px;top:848px;width:12px;height:12px;background:#fff;border-style:solid;border-width:2px 1px 1px 2px;border-color:#6a6a6a #e8e8e8 #e8e8e8 #6a6a6a"></div>
<div class="t" style="left:68.40px;top:848.75px;font-size:10.8px;transform:scaleX(0.9339);transform-origin:0 0;">Time Period</div>
<div class="a" style="left:154px;top:849px;width:12px;height:12px;background:#fff;border-style:solid;border-width:2px 1px 1px 2px;border-color:#6a6a6a #e8e8e8 #e8e8e8 #6a6a6a"></div>
<div class="t" style="left:172.50px;top:851.15px;font-size:10.8px;">Resource</div>
<div class="a" style="left:762px;top:518px;width:738px;height:355px;background:#fff;overflow:hidden">
<svg style="left:0;top:0" width="738" height="355" shape-rendering="crispEdges">
<rect x="0" y="0" width="738" height="17" fill="#efefef"/>
<rect x="0" y="17" width="738" height="1" fill="#a0a0a0"/>
<path d="M11.5 7.5H20.5" stroke="#c8c8c8"/><path d="M11.5 7.5L16 12.5L20.5 7.5" fill="none" stroke="#222" shape-rendering="auto"/>
<text x="24" y="13" font-family="Liberation Sans" font-size="10.8">Display: Open Projects Only</text>
<line x1="24" y1="270.5" x2="738" y2="270.5" stroke="#b8b8b8" stroke-dasharray="2,3"/>
<line x1="24" y1="219.5" x2="738" y2="219.5" stroke="#b8b8b8" stroke-dasharray="2,3"/>
<line x1="24" y1="169.5" x2="738" y2="169.5" stroke="#b8b8b8" stroke-dasharray="2,3"/>
<line x1="24" y1="68.5" x2="738" y2="68.5" stroke="#b8b8b8" stroke-dasharray="2,3"/>
<rect x="0" y="270" width="2" height="1" fill="#000"/>
<text x="18" y="274" text-anchor="end" font-family="Liberation Sans" font-size="10.6">2</text>
<rect x="0" y="219" width="2" height="1" fill="#000"/>
<text x="18" y="223" text-anchor="end" font-family="Liberation Sans" font-size="10.6">4</text>
<rect x="0" y="169" width="2" height="1" fill="#000"/>
<text x="18" y="173" text-anchor="end" font-family="Liberation Sans" font-size="10.6">6</text>
<rect x="0" y="118" width="2" height="1" fill="#000"/>
<text x="18" y="122" text-anchor="end" font-family="Liberation Sans" font-size="10.6">8</text>
<rect x="0" y="68" width="2" height="1" fill="#000"/>
<text x="18" y="72" text-anchor="end" font-family="Liberation Sans" font-size="10.6">10</text>
<rect x="163" y="18" width="1" height="302" fill="#808080"/>
<rect x="393" y="18" width="1" height="302" fill="#808080"/>
<rect x="624" y="18" width="1" height="302" fill="#808080"/>
<rect x="31" y="18" width="1" height="302" fill="#0000ff"/>
<rect x="196.5" y="120.5" width="30" height="200" fill="#80ff80" stroke="#3f7f3f"/>
<rect x="228.5" y="120.5" width="31" height="200" fill="#80ff80" stroke="#3f7f3f"/>
<rect x="261.5" y="120.5" width="31" height="200" fill="#80ff80" stroke="#3f7f3f"/>
<rect x="294.5" y="120.5" width="31" height="200" fill="#80ff80" stroke="#3f7f3f"/>
<rect x="327.5" y="120.5" width="31" height="200" fill="#80ff80" stroke="#3f7f3f"/>
<rect x="360.5" y="120.5" width="31" height="200" fill="#80ff80" stroke="#3f7f3f"/>
<rect x="393.5" y="120.5" width="31" height="200" fill="#80ff80" stroke="#3f7f3f"/>
<rect x="426.5" y="120.5" width="31" height="200" fill="#80ff80" stroke="#3f7f3f"/>
<rect x="459.5" y="120.5" width="31" height="200" fill="#80ff80" stroke="#3f7f3f"/>
<rect x="492.5" y="120.5" width="31" height="200" fill="#80ff80" stroke="#3f7f3f"/>
<rect x="21" y="118" width="717" height="2" fill="#000"/>
<rect x="57.5" y="43.5" width="146" height="85" fill="#fff" stroke="#000"/>
<rect x="63.5" y="51.5" width="9" height="9" fill="#0000ff" stroke="#00007f"/>
<text x="77" y="60" font-family="Liberation Sans" font-size="10.6">Actual Units</text>
<rect x="63.5" y="71.5" width="9" height="9" fill="#80ff80" stroke="#3f7f3f"/>
<text x="77" y="80" font-family="Liberation Sans" font-size="10.6">Remaining Early Units</text>
<rect x="63.5" y="91.5" width="9" height="9" fill="#ff0000" stroke="#7f0000"/>
<text x="77" y="100" font-family="Liberation Sans" font-size="10.6">Overallocated Early Units</text>
<rect x="63.5" y="111.5" width="9" height="9" fill="#000" stroke="#000"/>
<text x="77" y="120" font-family="Liberation Sans" font-size="10.6">Limit</text>
<rect x="0" y="320" width="738" height="35" fill="#efefef"/>
<rect x="0" y="320" width="738" height="1" fill="#000"/>
<rect x="0" y="338" width="738" height="1" fill="#000"/>
<text transform="translate(14.9,334) scale(0.91,1)" text-anchor="middle" font-family="Liberation Sans" font-size="15.6">Tue</text>
<rect x="31" y="321" width="1" height="17" fill="#000"/>
<text transform="translate(47.8,334) scale(0.91,1)" text-anchor="middle" font-family="Liberation Sans" font-size="15.6">W</text>
<rect x="64" y="321" width="1" height="17" fill="#000"/>
<text transform="translate(80.7,334) scale(0.91,1)" text-anchor="middle" font-family="Liberation Sans" font-size="15.6">Thr</text>
<rect x="97" y="321" width="1" height="17" fill="#000"/>
<text transform="translate(113.7,334) scale(0.91,1)" text-anchor="middle" font-family="Liberation Sans" font-size="15.6">Fri</text>
<rect x="130" y="321" width="1" height="17" fill="#000"/>
<text transform="translate(146.6,334) scale(0.91,1)" text-anchor="middle" font-family="Liberation Sans" font-size="15.6">Sat</text>
<rect x="163" y="321" width="1" height="17" fill="#000"/>
<rect x="163" y="339" width="1" height="17" fill="#000"/>
<text transform="translate(179.5,334) scale(0.91,1)" text-anchor="middle" font-family="Liberation Sans" font-size="15.6">Sun</text>
<rect x="196" y="321" width="1" height="17" fill="#000"/>
<text transform="translate(212.5,334) scale(0.91,1)" text-anchor="middle" font-family="Liberation Sans" font-size="15.6">Mon</text>
<rect x="228" y="321" width="1" height="17" fill="#000"/>
<text transform="translate(245.4,334) scale(0.91,1)" text-anchor="middle" font-family="Liberation Sans" font-size="15.6">Tue</text>
<rect x="261" y="321" width="1" height="17" fill="#000"/>
<text transform="translate(278.3,334) scale(0.91,1)" text-anchor="middle" font-family="Liberation Sans" font-size="15.6">W</text>
<rect x="294" y="321" width="1" height="17" fill="#000"/>
<text transform="translate(311.3,334) scale(0.91,1)" text-anchor="middle" font-family="Liberation Sans" font-size="15.6">Thr</text>
<rect x="327" y="321" width="1" height="17" fill="#000"/>
<text transform="translate(344.2,334) scale(0.91,1)" text-anchor="middle" font-family="Liberation Sans" font-size="15.6">Fri</text>
<rect x="360" y="321" width="1" height="17" fill="#000"/>
<text transform="translate(377.1,334) scale(0.91,1)" text-anchor="middle" font-family="Liberation Sans" font-size="15.6">Sat</text>
<rect x="393" y="321" width="1" height="17" fill="#000"/>
<rect x="393" y="339" width="1" height="17" fill="#000"/>
<text transform="translate(410.1,334) scale(0.91,1)" text-anchor="middle" font-family="Liberation Sans" font-size="15.6">Sun</text>
<rect x="426" y="321" width="1" height="17" fill="#000"/>
<text transform="translate(443.0,334) scale(0.91,1)" text-anchor="middle" font-family="Liberation Sans" font-size="15.6">Mon</text>
<rect x="459" y="321" width="1" height="17" fill="#000"/>
<text transform="translate(475.9,334) scale(0.91,1)" text-anchor="middle" font-family="Liberation Sans" font-size="15.6">Tue</text>
<rect x="492" y="321" width="1" height="17" fill="#000"/>
<text transform="translate(508.9,334) scale(0.91,1)" text-anchor="middle" font-family="Liberation Sans" font-size="15.6">W</text>
<rect x="525" y="321" width="1" height="17" fill="#000"/>
<text transform="translate(541.8,334) scale(0.91,1)" text-anchor="middle" font-family="Liberation Sans" font-size="15.6">Thr</text>
<rect x="558" y="321" width="1" height="17" fill="#000"/>
<text transform="translate(574.7,334) scale(0.91,1)" text-anchor="middle" font-family="Liberation Sans" font-size="15.6">Fri</text>
<rect x="591" y="321" width="1" height="17" fill="#000"/>
<text transform="translate(607.7,334) scale(0.91,1)" text-anchor="middle" font-family="Liberation Sans" font-size="15.6">Sat</text>
<rect x="624" y="321" width="1" height="17" fill="#000"/>
<rect x="624" y="339" width="1" height="17" fill="#000"/>
<text transform="translate(640.6,334) scale(0.91,1)" text-anchor="middle" font-family="Liberation Sans" font-size="15.6">Sun</text>
<rect x="657" y="321" width="1" height="17" fill="#000"/>
<text transform="translate(673.5,334) scale(0.91,1)" text-anchor="middle" font-family="Liberation Sans" font-size="15.6">Mon</text>
<rect x="690" y="321" width="1" height="17" fill="#000"/>
<text transform="translate(706.5,334) scale(0.91,1)" text-anchor="middle" font-family="Liberation Sans" font-size="15.6">Tue</text>
<rect x="722" y="321" width="1" height="17" fill="#000"/>
<text transform="translate(739.4,334) scale(0.91,1)" text-anchor="middle" font-family="Liberation Sans" font-size="15.6">W</text>
<rect x="755" y="321" width="1" height="17" fill="#000"/>
<text transform="translate(772.3,334) scale(0.91,1)" text-anchor="middle" font-family="Liberation Sans" font-size="15.6">Thr</text>
<text transform="translate(47.8,352) scale(0.91,1)" text-anchor="middle" font-family="Liberation Sans" font-size="15.6">Jul 10</text>
<text transform="translate(278.3,352) scale(0.91,1)" text-anchor="middle" font-family="Liberation Sans" font-size="15.6">Jul 17</text>
<text transform="translate(508.9,352) scale(0.91,1)" text-anchor="middle" font-family="Liberation Sans" font-size="15.6">Jul 24</text>
<text transform="translate(739.4,352) scale(0.91,1)" text-anchor="middle" font-family="Liberation Sans" font-size="15.6">Jul 31</text>
</svg>
</div>
<div class="a" style="left:1501px;top:136px;width:6px;height:737px;background:#d8d8d8"></div>
<div class="a" style="left:37px;top:873px;width:1464px;height:1px;background:#ffffff"></div>
<div class="a" style="left:30px;top:874px;width:1477px;height:5px;background:#d8d8d8"></div>
<div class="a" style="left:29px;top:879px;width:1479px;height:1px;background:#a0a0a0"></div>
<div class="a" style="left:28px;top:880px;width:1480px;height:1px;background:#ffffff"></div>
<div class="a" style="left:27px;top:881px;width:1483px;height:1px;background:#a0a0a0"></div>
<div class="a" style="left:0px;top:882px;width:1537px;height:18px;background:#f0f0f0"></div>
<div class="a" style="left:96px;top:884px;width:76px;height:16px;border-top:1px solid #a0a0a0;border-left:1px solid #a0a0a0;box-shadow:1px 0 0 #fff"></div>
<div class="a" style="left:174px;top:884px;width:111px;height:16px;border-top:1px solid #a0a0a0;border-left:1px solid #a0a0a0;box-shadow:1px 0 0 #fff"></div>
<div class="t" style="left:176.20px;top:885.65px;font-size:10.8px;transform:scaleX(0.9926);transform-origin:0 0;">Portfolio: All Projects</div>
<div class="a" style="left:287px;top:884px;width:126px;height:16px;border-top:1px solid #a0a0a0;border-left:1px solid #a0a0a0;box-shadow:1px 0 0 #fff"></div>
<div class="t" style="left:289.80px;top:885.65px;font-size:10.8px;transform:scaleX(1.0089);transform-origin:0 0;">Access Mode: Shared</div>
<div class="a" style="left:415px;top:884px;width:146px;height:16px;border-top:1px solid #a0a0a0;border-left:1px solid #a0a0a0;box-shadow:1px 0 0 #fff"></div>
<div class="t" style="left:417.40px;top:885.65px;font-size:10.8px;transform:scaleX(0.9794);transform-origin:0 0;">Data Date: 13-Jul-16</div>
<div class="a" style="left:563px;top:884px;width:131px;height:16px;border-top:1px solid #a0a0a0;border-left:1px solid #a0a0a0;box-shadow:1px 0 0 #fff"></div>
<div class="t" style="left:565.50px;top:885.65px;font-size:10.8px;transform:scaleX(0.9904);transform-origin:0 0;">Baseline: Current Project</div>
<div class="a" style="left:696px;top:884px;width:76px;height:16px;border-top:1px solid #a0a0a0;border-left:1px solid #a0a0a0;box-shadow:1px 0 0 #fff"></div>
<div class="t" style="left:698.60px;top:885.65px;font-size:10.8px;transform:scaleX(0.9515);transform-origin:0 0;">User: admin</div>
<div class="a" style="left:774px;top:884px;width:763px;height:16px;border-top:1px solid #a0a0a0;border-left:1px solid #a0a0a0;box-shadow:1px 0 0 #fff"></div>
<div class="t" style="left:776.40px;top:885.65px;font-size:10.8px;transform:scaleX(0.9718);transform-origin:0 0;">DB: PMDB (Professional)</div>
<svg style="left:1522px;top:886px" width="14" height="14"><path d="M13.5 1.5L1.5 13.5M13.5 5.5L5.5 13.5M13.5 9.5L9.5 13.5" stroke="#a0a0a0" stroke-width="1.3"/></svg>
</body></html>
